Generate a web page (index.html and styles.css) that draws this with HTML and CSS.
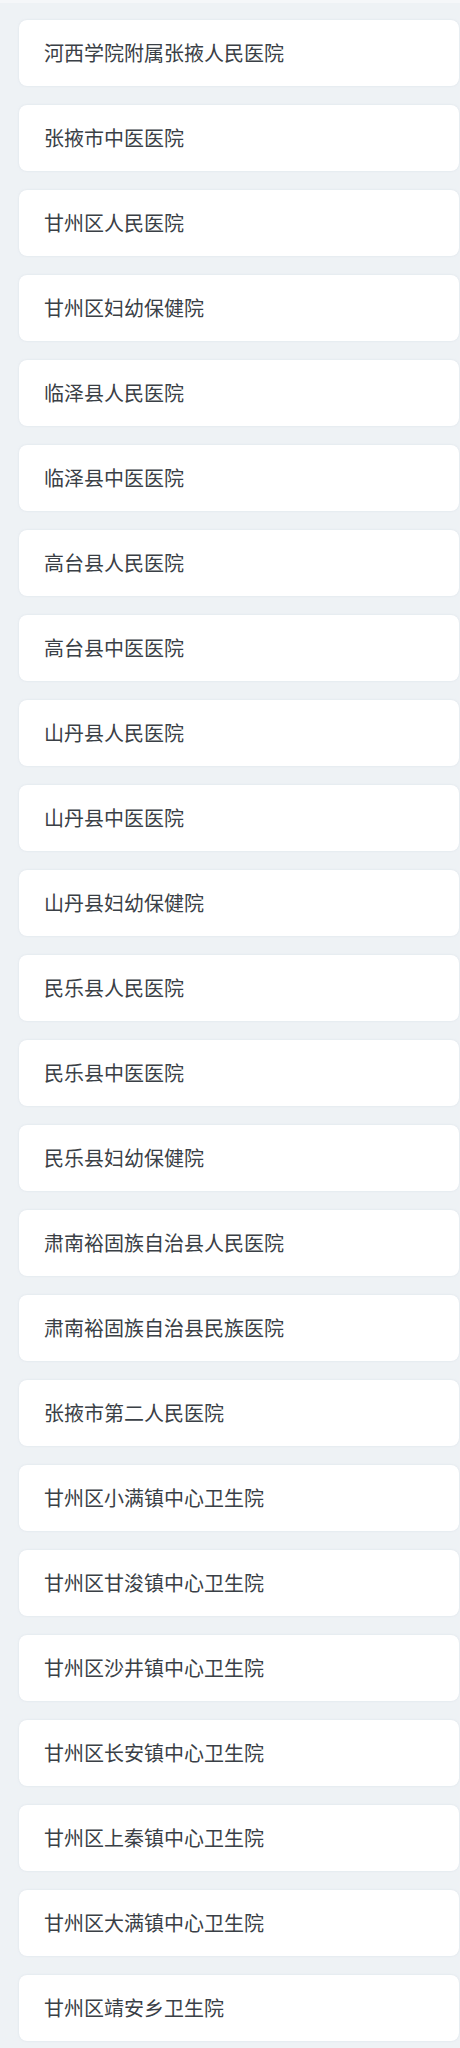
FILE: index.html
```html
<!DOCTYPE html>
<html lang="zh-CN">
<head>
<meta charset="utf-8">
<title>医院列表</title>
<link rel="stylesheet" href="styles.css">
</head>
<body>
<div class="topbar"></div>
<ul class="list">
  <li class="card">河西学院附属张掖人民医院</li>
  <li class="card">张掖市中医医院</li>
  <li class="card">甘州区人民医院</li>
  <li class="card">甘州区妇幼保健院</li>
  <li class="card">临泽县人民医院</li>
  <li class="card">临泽县中医医院</li>
  <li class="card">高台县人民医院</li>
  <li class="card">高台县中医医院</li>
  <li class="card">山丹县人民医院</li>
  <li class="card">山丹县中医医院</li>
  <li class="card">山丹县妇幼保健院</li>
  <li class="card">民乐县人民医院</li>
  <li class="card">民乐县中医医院</li>
  <li class="card">民乐县妇幼保健院</li>
  <li class="card">肃南裕固族自治县人民医院</li>
  <li class="card">肃南裕固族自治县民族医院</li>
  <li class="card">张掖市第二人民医院</li>
  <li class="card">甘州区小满镇中心卫生院</li>
  <li class="card">甘州区甘浚镇中心卫生院</li>
  <li class="card">甘州区沙井镇中心卫生院</li>
  <li class="card">甘州区长安镇中心卫生院</li>
  <li class="card">甘州区上秦镇中心卫生院</li>
  <li class="card">甘州区大满镇中心卫生院</li>
  <li class="card">甘州区靖安乡卫生院</li>
</ul>
</body>
</html>
```
FILE: styles.css
```css
html, body {
  margin: 0;
  padding: 0;
}
body {
  background: #eef2f5;
  font-family: "Noto Sans CJK SC", "Noto Sans", sans-serif;
  color: #3a4046;
}
.topbar {
  height: 3px;
  background: #f5f7f9;
}
.list {
  list-style: none;
  margin: 0;
  padding: 17px 1px 20px 19px;
  display: flex;
  flex-direction: column;
  gap: 19px;
}
.card {
  height: 66px;
  box-sizing: border-box;
  background: #ffffff;
  border-radius: 8px;
  box-shadow: 0 0 2px rgba(200, 210, 220, 0.6);
  display: flex;
  align-items: center;
  padding-left: 25px;
  font-size: 20px;
  font-weight: 400;
  line-height: 1;
}
```
